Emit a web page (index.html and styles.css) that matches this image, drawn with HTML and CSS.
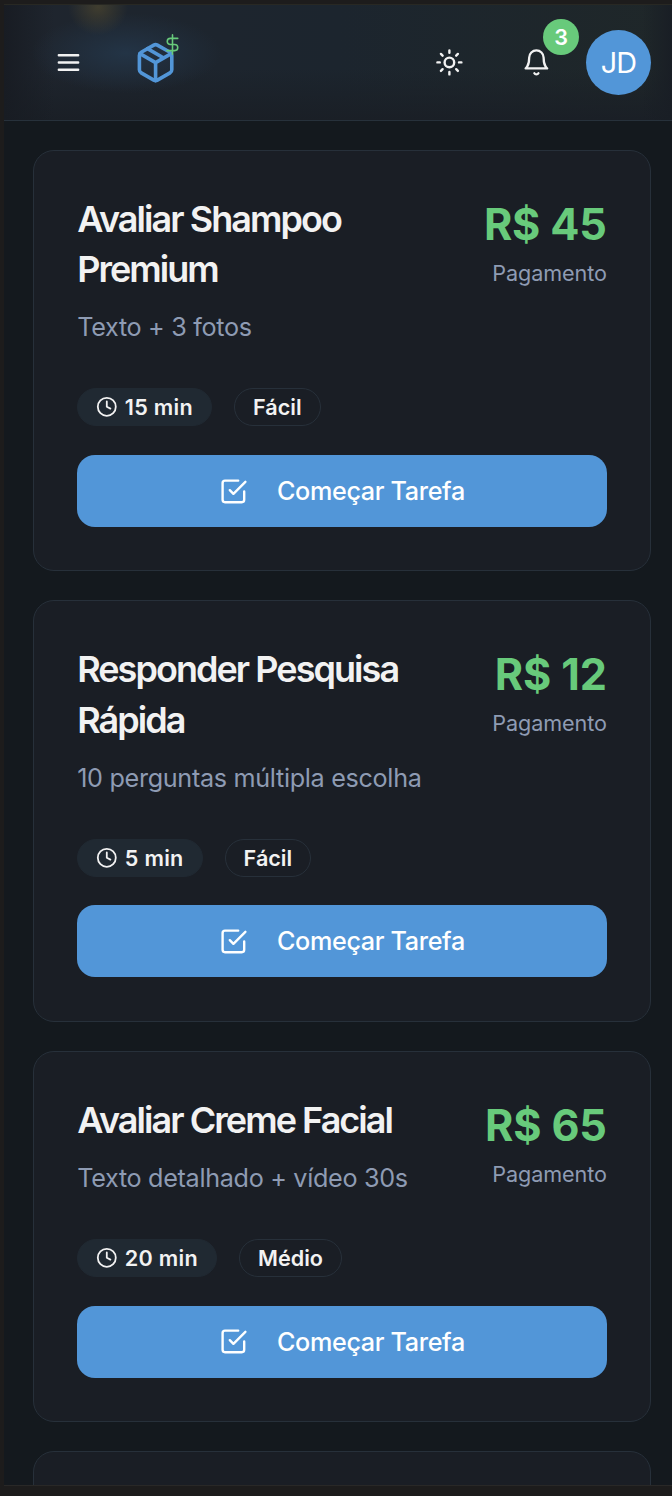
FILE: index.html
```html
<!DOCTYPE html>
<html lang="pt-BR">
<head>
<meta charset="utf-8">
<title>Tarefas</title>
<link rel="stylesheet" href="styles.css">
</head>
<body>
<svg class="sprite" aria-hidden="true">
  <symbol id="clock" viewBox="0 0 24 24"><circle cx="12" cy="12" r="10"/><path d="M12 6v6l4 2"/></symbol>
  <symbol id="check" viewBox="0 0 24 24"><path d="m9 11 3 3L22 4"/><path d="M21 12v7a2 2 0 0 1-2 2H5a2 2 0 0 1-2-2V5a2 2 0 0 1 2-2h11"/></symbol>
</svg>
<div class="screen">
  <header class="topbar">
    <svg class="icon menu" viewBox="0 0 24 24"><path d="M4 6h16M4 12h16M4 18h16"/></svg>
    <div class="logo">
      <svg class="icon box" viewBox="0 0 24 24"><path d="M21 8a2 2 0 0 0-1-1.73l-7-4a2 2 0 0 0-2 0l-7 4A2 2 0 0 0 3 8v8a2 2 0 0 0 1 1.73l7 4a2 2 0 0 0 2 0l7-4A2 2 0 0 0 21 16Z"/><path d="m3.3 7 8.7 5 8.7-5M12 22V12M7.5 4.27l9 5.15"/></svg>
      <svg class="icon dollar" viewBox="0 0 24 24"><path d="M12 1v22M18 5H9.5a3.5 3.5 0 0 0 0 7h5a3.5 3.5 0 0 1 0 7H5.5"/></svg>
    </div>
    <div class="actions">
      <svg class="icon sun" viewBox="0 0 24 24"><circle cx="12" cy="12" r="4"/><path d="M12 2v2M12 20v2M4.93 4.93l1.41 1.41M17.66 17.66l1.41 1.41M2 12h2M20 12h2M6.34 17.66l-1.41 1.41M19.07 4.93l-1.41 1.41"/></svg>
      <div class="notify">
        <svg class="icon bell" viewBox="0 0 24 24"><path d="M6 8a6 6 0 0 1 12 0c0 7 3 9 3 9H3s3-2 3-9"/><path d="M10.3 21a1.94 1.94 0 0 0 3.4 0"/></svg>
        <span class="count">3</span>
      </div>
      <div class="avatar"><span>JD</span></div>
    </div>
  </header>
  <main class="list">
    <article class="card">
      <div class="head">
        <div class="info"><h3>Avaliar Shampoo<br>Premium</h3><p class="desc">Texto + 3 fotos</p></div>
        <div class="pay"><div class="price">R$ 45</div><div class="label">Pagamento</div></div>
      </div>
      <div class="tags"><span class="tag time"><svg class="icon"><use href="#clock"/></svg>15 min</span><span class="tag level">Fácil</span></div>
      <button class="start"><svg class="icon"><use href="#check"/></svg><span>Começar Tarefa</span></button>
    </article>
    <article class="card">
      <div class="head">
        <div class="info"><h3>Responder Pesquisa<br>Rápida</h3><p class="desc">10 perguntas múltipla escolha</p></div>
        <div class="pay"><div class="price">R$ 12</div><div class="label">Pagamento</div></div>
      </div>
      <div class="tags"><span class="tag time"><svg class="icon"><use href="#clock"/></svg>5 min</span><span class="tag level">Fácil</span></div>
      <button class="start"><svg class="icon"><use href="#check"/></svg><span>Começar Tarefa</span></button>
    </article>
    <article class="card">
      <div class="head">
        <div class="info"><h3>Avaliar Creme Facial</h3><p class="desc">Texto detalhado + vídeo 30s</p></div>
        <div class="pay"><div class="price">R$ 65</div><div class="label">Pagamento</div></div>
      </div>
      <div class="tags"><span class="tag time"><svg class="icon"><use href="#clock"/></svg>20 min</span><span class="tag level">Médio</span></div>
      <button class="start"><svg class="icon"><use href="#check"/></svg><span>Começar Tarefa</span></button>
    </article>
    <article class="card"></article>
  </main>
</div>
</body>
</html>
```
FILE: styles.css
```css
* { box-sizing: border-box; }
body {
  margin: 0;
  height: 1496px;
  overflow: hidden;
  padding: 4px 0 10px 4px;
  background: #1d1c1c;
  font-family: Inter, "Noto Sans", sans-serif;
  color: #f2f2f2;
}
.sprite { position: absolute; width: 0; height: 0; }
.screen {
  height: 1482px;
  overflow: hidden;
  background: #14191e;
  border-top: 1px solid #282823;
  border-bottom: 1px solid #292827;
}
.icon {
  display: block;
  flex: none;
  fill: none;
  stroke: currentColor;
  stroke-width: 2;
  stroke-linecap: round;
  stroke-linejoin: round;
}
.topbar {
  height: 116px;
  display: flex;
  align-items: center;
  padding: 0 21px 0 50px;
  border-bottom: 1px solid #27313b;
  background:
    radial-gradient(ellipse 30px 28px at 94px 2px, #48432fcc, #48432f00),
    radial-gradient(ellipse 95px 40px at 122px 48px, #233446, #23344600),
    linear-gradient(to right, #181c23, #181c2300 50px),
    linear-gradient(to left, #191e25, #191e2500 30px),
    linear-gradient(#1a1f2600 55%, #1a1f26),
    linear-gradient(to right, #1f252e, #1c252e 50%, #1f2729);
}
.menu { width: 29px; height: 29px; }
.logo { position: relative; margin-left: 51px; }
.box { width: 43.2px; height: 43.2px; color: #5296d8; }
.dollar {
  position: absolute;
  left: 27.5px;
  top: -6.5px;
  width: 21px;
  height: 21px;
  stroke-width: 1.8;
  color: #68ca7b;
}
.actions { margin-left: auto; display: flex; align-items: center; }
.sun { width: 28.8px; height: 28.8px; margin-right: 58px; }
.notify { position: relative; margin-right: 35px; }
.bell { width: 28.8px; height: 28.8px; stroke-width: 1.9; }
.count {
  position: absolute;
  left: 21px;
  top: -29px;
  width: 36px;
  height: 36px;
  border-radius: 50%;
  background: #68ca7b;
  color: #fff;
  font-size: 21.6px;
  font-weight: 600;
  line-height: 37px;
  text-align: center;
}
.avatar {
  width: 65px;
  height: 65px;
  border-radius: 50%;
  background: #5296d8;
  color: #fff;
  display: grid;
  place-items: center;
  font-size: 28.8px;
  letter-spacing: -0.8px;
}
.list { padding: 28.8px 21px 0 29px; display: flex; flex-direction: column; gap: 29.1px; }
.card {
  flex: none;
  min-height: 100px;
  padding: 43.2px;
  border: 1px solid #27303a;
  border-radius: 21px;
  background: #1a1e25;
}
.head { display: flex; justify-content: space-between; }
h3 {
  margin: 0 0 14.4px;
  font-size: 36px;
  line-height: 50.4px;
  font-weight: 600;
  letter-spacing: -1.95px;
  white-space: nowrap;
}
.desc {
  margin: 0;
  font-size: 25.2px;
  line-height: 36px;
  letter-spacing: -0.32px;
  color: #8e9bb3;
  white-space: nowrap;
}
.pay { text-align: right; }
.price {
  padding-top: 2px;
  font-size: 43.2px;
  line-height: 57.6px;
  font-weight: 700;
  letter-spacing: -0.15px;
  color: #68ca7b;
  white-space: nowrap;
}
.label { margin-top: 5px; font-size: 21.6px; line-height: 28.8px; letter-spacing: -0.1px; color: #8e9bb3; }
.tags { display: flex; gap: 22px; margin-top: 43px; }
.tag {
  height: 38px;
  display: flex;
  align-items: center;
  padding: 0 18px;
  border: 1px solid #27303a;
  border-radius: 19px;
  font-size: 21.6px;
  font-weight: 600;
  white-space: nowrap;
}
.time { background: #202932; border-color: #202932; letter-spacing: 0.3px; }
.tag .icon { width: 21.6px; height: 21.6px; margin-right: 7px; }
.start {
  display: flex;
  align-items: center;
  justify-content: center;
  gap: 29px;
  width: 100%;
  height: 72px;
  margin-top: 28.8px;
  padding: 0;
  border: 0;
  border-radius: 18px;
  background: #5296d8;
  color: #fff;
  font: 500 25.2px/36px Inter, "Noto Sans", sans-serif;
  letter-spacing: -0.35px;
}
.start .icon { width: 28.8px; height: 28.8px; }
```
